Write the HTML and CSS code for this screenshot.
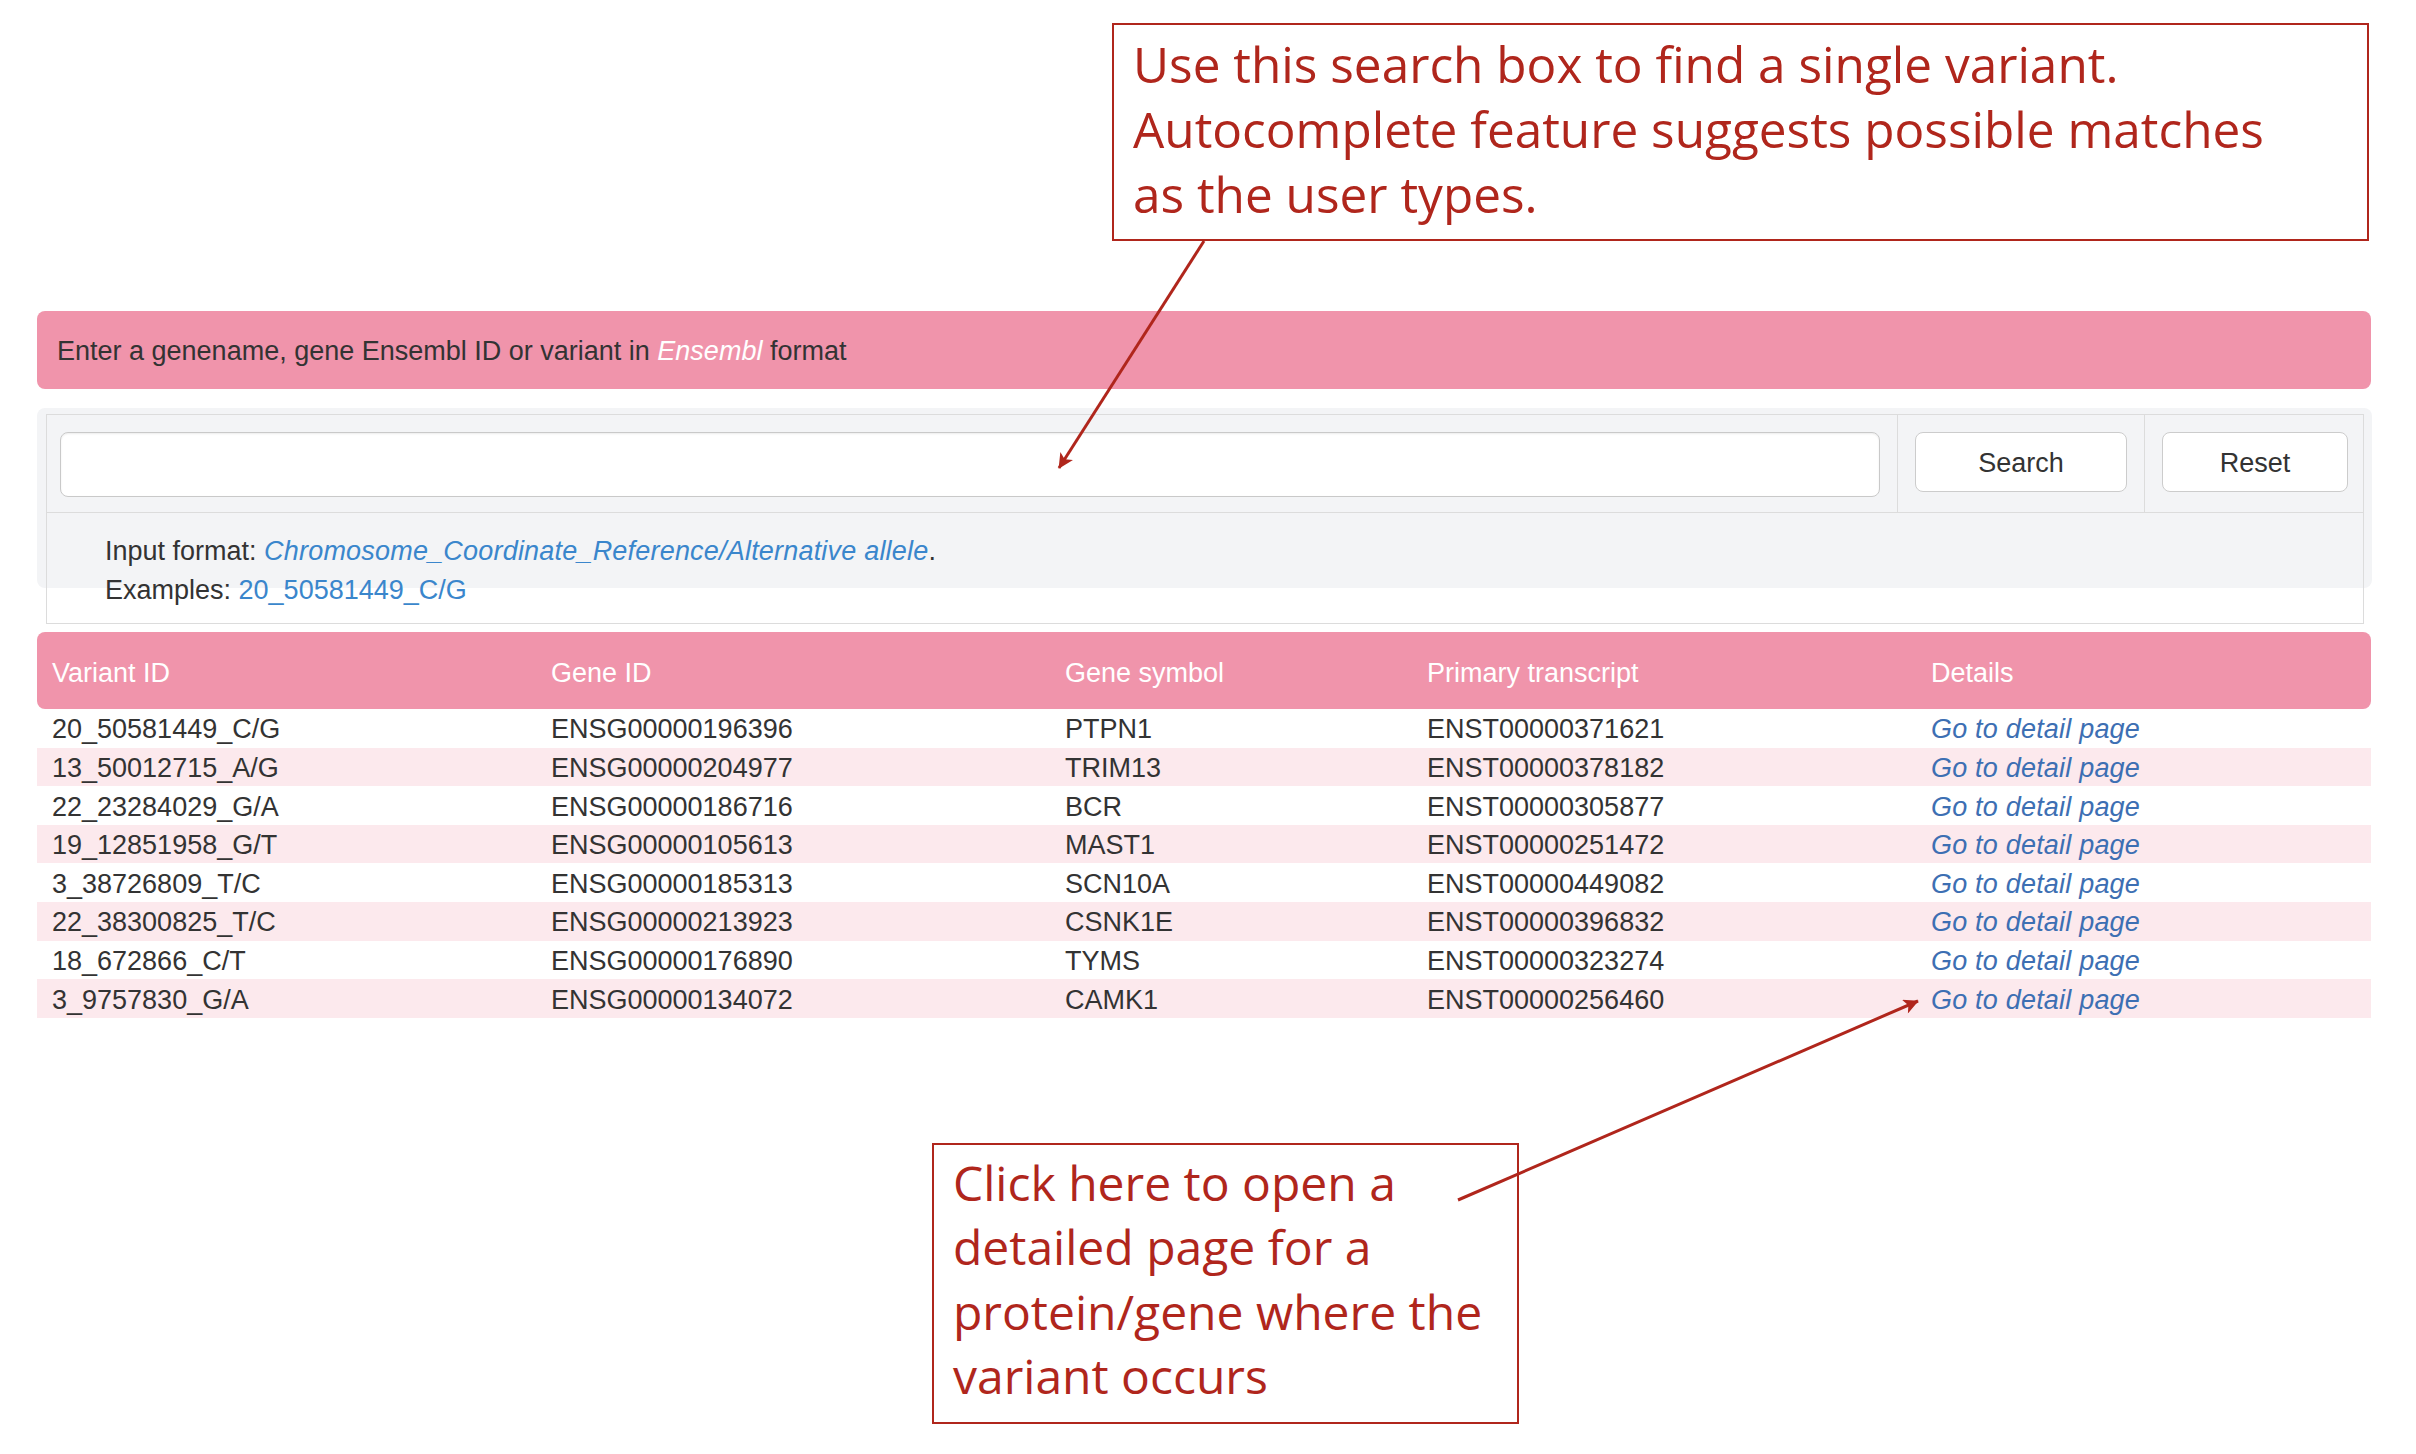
FILE: index.html
```html
<!DOCTYPE html>
<html lang="en">
<head>
<meta charset="utf-8">
<title>Variant search</title>
<link rel="stylesheet" href="styles.css">
</head>
<body>
<main class="page">
  <div class="alert">Enter a genename, gene Ensembl ID or variant in <em>Ensembl</em> format</div>
  <div class="well">
    <table class="search-table">
      <tr>
        <td class="cell-input"><input class="search-input" type="text"></td>
        <td class="cell-search"><button class="btn btn-search" type="button">Search</button></td>
        <td class="cell-reset"><button class="btn btn-reset" type="button">Reset</button></td>
      </tr>
      <tr>
        <td class="cell-help" colspan="3">
          <div>Input format: <a class="help-link format-link"><em>Chromosome_Coordinate_Reference/Alternative allele</em></a>.</div>
          <div>Examples: <a class="help-link">20_50581449_C/G</a></div>
        </td>
      </tr>
    </table>
  </div>
  <table class="results">
    <colgroup>
      <col class="c1"><col class="c2"><col class="c3"><col class="c4"><col class="c5">
    </colgroup>
    <thead>
      <tr><th>Variant ID</th><th>Gene ID</th><th>Gene symbol</th><th>Primary transcript</th><th>Details</th></tr>
    </thead>
    <tbody>
      <tr><td>20_50581449_C/G</td><td>ENSG00000196396</td><td>PTPN1</td><td>ENST00000371621</td><td><a class="detail-link">Go to detail page</a></td></tr>
      <tr><td>13_50012715_A/G</td><td>ENSG00000204977</td><td>TRIM13</td><td>ENST00000378182</td><td><a class="detail-link">Go to detail page</a></td></tr>
      <tr><td>22_23284029_G/A</td><td>ENSG00000186716</td><td>BCR</td><td>ENST00000305877</td><td><a class="detail-link">Go to detail page</a></td></tr>
      <tr><td>19_12851958_G/T</td><td>ENSG00000105613</td><td>MAST1</td><td>ENST00000251472</td><td><a class="detail-link">Go to detail page</a></td></tr>
      <tr><td>3_38726809_T/C</td><td>ENSG00000185313</td><td>SCN10A</td><td>ENST00000449082</td><td><a class="detail-link">Go to detail page</a></td></tr>
      <tr><td>22_38300825_T/C</td><td>ENSG00000213923</td><td>CSNK1E</td><td>ENST00000396832</td><td><a class="detail-link">Go to detail page</a></td></tr>
      <tr><td>18_672866_C/T</td><td>ENSG00000176890</td><td>TYMS</td><td>ENST00000323274</td><td><a class="detail-link">Go to detail page</a></td></tr>
      <tr><td>3_9757830_G/A</td><td>ENSG00000134072</td><td>CAMK1</td><td>ENST00000256460</td><td><a class="detail-link">Go to detail page</a></td></tr>
    </tbody>
  </table>
</main>

<div class="callout callout-top">Use this search box to find a single variant.<br>Autocomplete feature suggests possible matches<br>as the user types.</div>
<div class="callout callout-bottom">Click here to open a<br>detailed page for a<br>protein/gene where the<br>variant occurs</div>

<svg class="arrows" width="2416" height="1454" viewBox="0 0 2416 1454" xmlns="http://www.w3.org/2000/svg">
  <defs>
    <marker id="head" markerUnits="userSpaceOnUse" viewBox="0 0 10 10" refX="9.5" refY="5" markerWidth="22" markerHeight="15" orient="auto">
      <path d="M0,0 L10,5 L0,10 L2.5,5 z" fill="#b0261c"/>
    </marker>
  </defs>
  <line x1="1204" y1="241" x2="1059" y2="468" stroke="#b0261c" stroke-width="3" marker-end="url(#head)"/>
  <line x1="1458" y1="1200" x2="1918" y2="1001" stroke="#b0261c" stroke-width="3" marker-end="url(#head)"/>
</svg>
</body>
</html>
```

FILE: styles.css
```css
html, body {
  margin: 0;
  padding: 0;
  background: #ffffff;
}

body {
  position: relative;
  width: 2416px;
  height: 1454px;
  overflow: hidden;
  font-family: "Liberation Sans", Arial, Helvetica, sans-serif;
  font-size: 27px;
  line-height: 38.6px;
  color: #333333;
}

.page {
  padding: 311px 45px 0 37px;
}

/* pink info alert */
.alert {
  background: #f094ab;
  border-radius: 8px;
  height: 78px;
  box-sizing: border-box;
  line-height: 78px;
  padding: 1px 20px 0;
}

.alert em {
  color: #ffffff;
}

/* search well */
.well {
  margin-top: 19px;
  height: 180px;
  box-sizing: border-box;
  margin-right: -1px;
  padding: 6px 8px 0 9px;
  background: #f3f4f6;
  border-radius: 8px;
}

.search-table {
  width: 100%;
  border-collapse: collapse;
  border: 1px solid #dcdcdc;
}

.search-table td {
  border: 1px solid #dcdcdc;
  vertical-align: top;
}

.cell-input {
  padding: 17px 17px 15px 13px;
}

.cell-search {
  width: 212px;
  padding: 17px 17px 0 17px;
}

.cell-reset {
  width: 186px;
  padding: 17px 15px 0 17px;
}

.search-input {
  display: block;
  width: 100%;
  height: 65px;
  box-sizing: border-box;
  border: 1px solid #c9c9c9;
  border-radius: 8px;
  background: #ffffff;
  box-shadow: inset 0 1px 2px rgba(0, 0, 0, 0.08);
  font: inherit;
}

.btn {
  display: block;
  height: 60px;
  box-sizing: border-box;
  background: #ffffff;
  border: 1px solid #cccccc;
  border-radius: 8px;
  font-family: "Liberation Sans", Arial, Helvetica, sans-serif;
  font-size: 27px;
  color: #333333;
  padding: 2px 0 0;
}

.btn-search {
  width: 212px;
}

.btn-reset {
  width: 186px;
}

.cell-help {
  padding: 19px 20px 14px 58px;
  line-height: 38.6px;
}

.help-link {
  color: #3a86cc;
}

.format-link {
  letter-spacing: 0.2px;
}

/* results table */
.results {
  width: 100%;
  margin-top: 44px;
  border-collapse: separate;
  border-spacing: 0;
  table-layout: fixed;
}

.c1 { width: 499px; }
.c2 { width: 514px; }
.c3 { width: 362px; }
.c4 { width: 504px; }
.c5 { width: 455px; }

.results th {
  background: #f094ab;
  color: #ffffff;
  font-weight: normal;
  text-align: left;
  padding: 22px 15px 16.4px;
  line-height: 38.6px;
}

.results th:first-child {
  border-radius: 8px 0 0 8px;
}

.results th:last-child {
  border-radius: 0 8px 8px 0;
}

.results td {
  padding: 2.5px 15px 0;
  line-height: 36.1px;
  white-space: nowrap;
}

.results tbody tr:nth-child(even) td {
  background: #fce9ed;
}

.detail-link {
  color: #3d6fb3;
  font-style: italic;
  letter-spacing: 0.2px;
}

/* annotation callouts */
.callout {
  position: absolute;
  box-sizing: border-box;
  border: 2px solid #b0261c;
  color: #b0261c;
  font-family: "Open Sans", "Liberation Sans", sans-serif;
  font-size: 48px;
  line-height: 65px;
  white-space: nowrap;
}

.callout-top {
  left: 1112px;
  top: 23px;
  width: 1257px;
  height: 218px;
  padding: 7px 19px;
  font-size: 49.5px;
}

.callout-bottom {
  left: 932px;
  top: 1143px;
  width: 587px;
  height: 281px;
  padding: 6px 19px;
  line-height: 64.3px;
}

.arrows {
  position: absolute;
  left: 0;
  top: 0;
  pointer-events: none;
}
```
